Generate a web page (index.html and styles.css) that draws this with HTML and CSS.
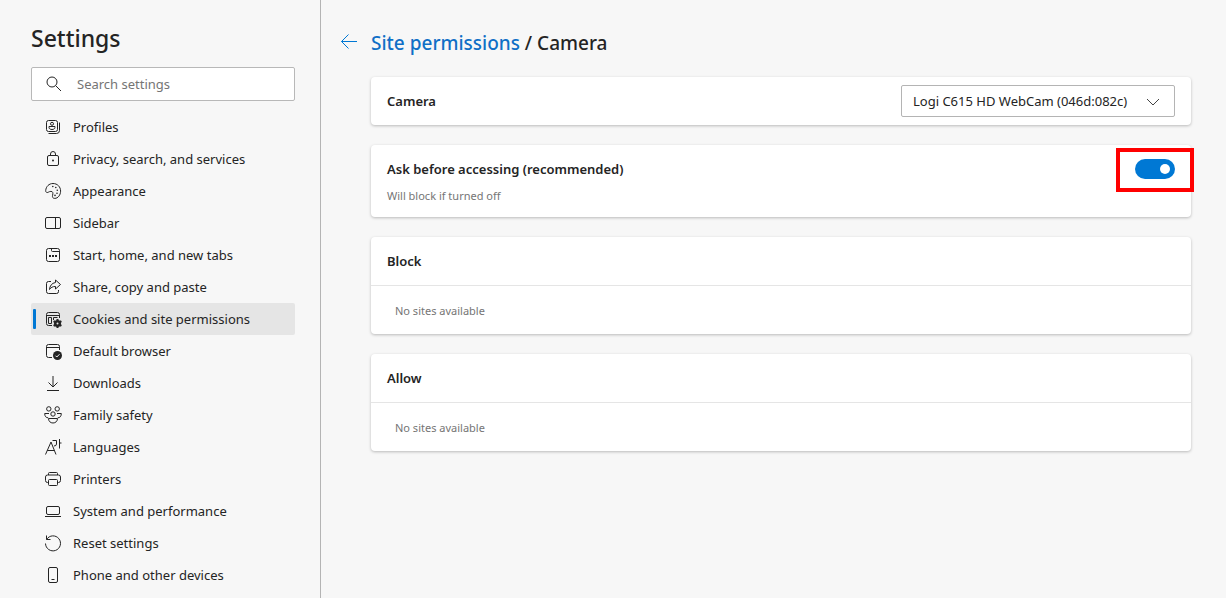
FILE: index.html
```html
<!DOCTYPE html>
<html lang="en">
<head>
    <meta charset="UTF-8">
    <meta name="viewport" content="width=device-width, initial-scale=1.0">
    <title>Settings</title>
    <link rel="stylesheet" href="styles.css">
</head>
<body>
    <aside class="sidebar">
        <h1>Settings</h1>
        <label class="search">
            <svg class="icon" viewBox="0 0 18 18"><circle cx="7" cy="7" r="5"/><path d="M10.700 10.700L16 16"/></svg>
            <input type="search" placeholder="Search settings" aria-label="Search settings">
        </label>
        <nav class="menu">
            <a href="#">
                <svg class="icon" viewBox="0 0 18 18"><rect x="2.500" y="2.500" width="11" height="11" rx="2"/><circle cx="8" cy="5.800" r="1.500"/><path d="M5 8.500h6v.8c0 1.500-1.300 2.200-3 2.200s-3-.7-3-2.200zM15.500 4.500v8a3 3 0 0 1-3 3h-8"/></svg>
                Profiles
            </a>
            <a href="#">
                <svg class="icon" viewBox="0 0 18 18"><rect x="3.500" y="5.500" width="11" height="10" rx="1.500"/><path d="M6.500 5.500V4a2.500 2.500 0 0 1 5 0v1.500"/><circle class="fill" cx="9" cy="10.500" r="1"/></svg>
                Privacy, search, and services
            </a>
            <a href="#">
                <svg class="icon" viewBox="0 0 18 18"><path d="M1.700 8.600C2 4.500 5 1.500 9 1.500c4.400 0 7.600 3.300 7.600 7.600 0 3.900-2.700 7.300-5.800 7.300-2 0-2.700-1.300-2.200-3.100.6-2.200.4-3.900-1.700-3.900-2.100 0-2.700 1.400-4 1.100-.8-.2-1.300-.9-1.200-1.900z"/><g class="fill"><circle cx="8.800" cy="4.500" r=".8"/><circle cx="11.800" cy="5.500" r=".8"/><circle cx="13.300" cy="8.200" r=".8"/><circle cx="13" cy="11.200" r=".8"/><circle cx="11" cy="13.400" r=".8"/></g></svg>
                Appearance
            </a>
            <a href="#">
                <svg class="icon" viewBox="0 0 18 18"><rect x="1.500" y="3.500" width="15" height="11" rx="1.500"/><path d="M11.500 3.500v11"/></svg>
                Sidebar
            </a>
            <a href="#">
                <svg class="icon" viewBox="0 0 18 18"><rect x="2.500" y="2.500" width="13" height="13" rx="2"/><path d="M7.500 2.500v2q0 1 1 1h7"/><path class="fill" d="M5 9h2v2H5zM8 9h2v2H8zM11 9h2v2h-2z"/></svg>
                Start, home, and new tabs
            </a>
            <a href="#">
                <svg class="icon" viewBox="0 0 18 18"><path d="M7 3.500H4.500a2 2 0 0 0-2 2v8a2 2 0 0 0 2 2h8a2 2 0 0 0 2-2V12"/><path d="M11.500 2l5 4.500-5 4.500V8.500C8.500 8.400 7 9.500 5.500 11.500c.3-3.500 2.200-6.500 6-7z"/></svg>
                Share, copy and paste
            </a>
            <a href="#" class="active" aria-current="page">
                <svg class="icon" viewBox="0 0 18 18"><path d="M8 15.500H4.500a2 2 0 0 1-2-2v-9a2 2 0 0 1 2-2h9a2 2 0 0 1 2 2V8M2.500 5.500h13M4.500 7.500h3v6h-3zM9.500 10V7.500h4"/><circle class="fill" cx="13.500" cy="13.500" r="3.500"/><path class="teeth" d="M13.500 9v9M9.600 11.200l7.800 4.600M9.600 15.800l7.800-4.600"/><circle class="hole" cx="13.500" cy="13.500" r="1"/></svg>
                Cookies and site permissions
            </a>
            <a href="#">
                <svg class="icon" viewBox="0 0 18 18"><path d="M8 15.500H4.500a2 2 0 0 1-2-2v-9a2 2 0 0 1 2-2h9a2 2 0 0 1 2 2V8M2.500 5.500h13"/><circle class="fill" cx="13.500" cy="13.500" r="4.500"/><path class="check" d="M11.500 13.700l1.300 1.300 2.700-2.800"/></svg>
                Default browser
            </a>
            <a href="#">
                <svg class="icon" viewBox="0 0 18 18"><path d="M9 2v11M4.500 8.500L9 13l4.500-4.500M3 16.500h12"/></svg>
                Downloads
            </a>
            <a href="#">
                <svg class="icon" viewBox="0 0 18 18"><circle cx="4.800" cy="2.900" r="2.200"/><circle cx="13.200" cy="2.900" r="2.200"/><circle cx="9" cy="8" r="2.200"/><path d="M5 7.500H.7c0 3 1.500 4.300 3.500 4.300M13 7.500h4.300c0 3-1.500 4.300-3.500 4.300M4.500 12.500h9c0 2.700-1.900 4.500-4.500 4.500s-4.500-1.800-4.500-4.500z"/></svg>
                Family safety
            </a>
            <a href="#">
                <svg class="icon" viewBox="0 0 18 18"><path d="M1.500 16.500L7 4l5 12.500M3.200 12.500h7.200M8.500 2.500h4V6q0 2-2.500 2M15.500 1v9.500M15.500 5h2"/></svg>
                Languages
            </a>
            <a href="#">
                <svg class="icon" viewBox="0 0 18 18"><path d="M4.500 12.500h-1a2 2 0 0 1-2-2V7a2 2 0 0 1 2-2h11a2 2 0 0 1 2 2v3.500a2 2 0 0 1-2 2h-1M4.500 5V3.500q0-1 1-1h7q1 0 1 1V5"/><rect x="4.500" y="9.500" width="9" height="6" rx="1"/></svg>
                Printers
            </a>
            <a href="#">
                <svg class="icon" viewBox="0 0 18 18"><rect x="2.500" y="4.500" width="13" height="8" rx="1.500"/><path d="M1 14.500h16"/></svg>
                System and performance
            </a>
            <a href="#">
                <svg class="icon" viewBox="0 0 18 18"><path d="M2.500 1.500v4h4M2.700 5.300A7.500 7.500 0 1 1 1.500 9.500"/></svg>
                Reset settings
            </a>
            <a href="#">
                <svg class="icon" viewBox="0 0 18 18"><rect x="4.500" y="1.500" width="9" height="15" rx="1.500"/><path d="M7.500 13.500h3"/></svg>
                Phone and other devices
            </a>
        </nav>
    </aside>

    <main class="content">
        <header class="page-header">
            <button class="back" type="button" aria-label="Back">
                <svg class="icon" viewBox="0 0 18 18"><path d="M17 8.500H1.500M8.500 1.500l-7 7 7 7"/></svg>
            </button>
            <h2><a href="#">Site permissions</a> / Camera</h2>
        </header>

        <section class="card row">
            <label class="card-title" for="camera">Camera</label>
            <div class="select-box">
                <select id="camera">
                    <option>Logi C615 HD WebCam (046d:082c)</option>
                </select>
                <svg class="chevron" viewBox="0 0 14 8"><path d="M1 1l6 6 6-6"/></svg>
            </div>
        </section>

        <section class="card row ask">
            <div>
                <label class="card-title" for="ask">Ask before accessing (recommended)</label>
                <p class="hint">Will block if turned off</p>
            </div>
            <div class="toggle-box">
                <input type="checkbox" id="ask" class="toggle" role="switch" checked>
            </div>
        </section>

        <section class="card">
            <h3 class="card-title">Block</h3>
            <p class="empty">No sites available</p>
        </section>

        <section class="card">
            <h3 class="card-title">Allow</h3>
            <p class="empty">No sites available</p>
        </section>
    </main>
</body>
</html>
```
FILE: styles.css
```css
* {
    box-sizing: border-box;
}
body {
    display: flex;
    min-height: 100vh;
    margin: 0;
    background: #f7f7f7;
    color: #242424;
    font-family: "Segoe UI", "Noto Sans", sans-serif;
    font-size: 13px;
    line-height: 20px;
}
h1, h2, h3, p {
    margin: 0;
}
a {
    color: inherit;
    text-decoration: none;
}
input, select {
    font: inherit;
    color: inherit;
}
.icon {
    flex: none;
    width: 18px;
    height: 18px;
    fill: none;
    stroke: currentColor;
    stroke-width: 1;
}
.icon .fill {
    fill: currentColor;
    stroke: none;
}
.icon .teeth {
    stroke-width: 2;
}
.icon .hole {
    fill: #e5e5e5;
    stroke: none;
}
.icon .check {
    stroke: #f7f7f7;
}

/* sidebar */
.sidebar {
    flex: none;
    width: 321px;
    padding: 22px 25px 0 31px;
    border-right: 1px solid #b4b4b4;
}
h1 {
    margin-bottom: 13px;
    font-size: 23px;
    font-weight: 500;
    line-height: 32px;
}
.search {
    display: flex;
    align-items: center;
    gap: 14px;
    height: 34px;
    margin-bottom: 10px;
    padding: 0 13px;
    background: white;
    border: 1px solid #b8b8b8;
    border-radius: 2px;
}
.search input {
    flex: 1;
    min-width: 0;
    padding: 0;
    border: none;
    outline: none;
    background: none;
}
.search input::placeholder {
    color: #757575;
}
.menu a {
    position: relative;
    display: flex;
    align-items: center;
    gap: 11px;
    height: 32px;
    padding-left: 13px;
    border-radius: 2px;
}
.menu a:hover, .menu .active {
    background: #e5e5e5;
}
.menu .active::before {
    content: "";
    position: absolute;
    left: 2px;
    top: 6px;
    width: 3px;
    height: 20px;
    border-radius: 1px;
    background: #0078d4;
}

/* content */
.content {
    flex: 1;
    display: flex;
    flex-direction: column;
    gap: 20px;
    padding: 27px 35px 20px 50px;
}
.page-header {
    display: flex;
    align-items: center;
    gap: 13px;
    margin-left: -31px;
}
.back {
    display: flex;
    padding: 0;
    border: none;
    background: none;
    color: #0078d4;
    cursor: pointer;
}
h2 {
    padding-top: 2px;
    font-size: 19px;
    font-weight: 500;
    line-height: 28px;
}
h2 a {
    color: #0f6fc6;
}
.card {
    background: white;
    border-radius: 4px;
    box-shadow: 0 1px 3px rgba(0,0,0,0.25);
}
.card-title {
    font-size: 13px;
    font-weight: 600;
}
.row {
    display: flex;
    align-items: center;
    justify-content: space-between;
    padding: 8px 16px;
}
.select-box {
    position: relative;
}
.select-box select {
    appearance: none;
    display: block;
    height: 32px;
    padding: 0 46px 0 11px;
    border: 1px solid #b4b4b4;
    border-radius: 2px;
    background: white;
}
.chevron {
    position: absolute;
    right: 15px;
    top: 13px;
    width: 14px;
    height: 8px;
    fill: none;
    stroke: #444;
    pointer-events: none;
}
.ask {
    align-items: flex-start;
    padding: 14px 16px 11px;
}
.hint {
    margin-top: 7px;
    color: #757575;
    font-size: 11px;
}
.toggle-box {
    position: relative;
    display: flex;
}
.toggle-box::after {
    content: "";
    position: absolute;
    inset: -11px -19px -13px;
    border: 4px solid #f00;
    pointer-events: none;
}
.toggle {
    appearance: none;
    display: flex;
    align-items: center;
    justify-content: flex-start;
    width: 40px;
    height: 20px;
    margin: 0;
    padding: 0 5px;
    border-radius: 10px;
    background: #767676;
}
.toggle::before {
    content: "";
    width: 10px;
    height: 10px;
    border-radius: 50%;
    background: white;
}
.toggle:checked {
    justify-content: flex-end;
    background: #0078d4;
}
h3.card-title {
    padding: 14px 16px;
    border-bottom: 1px solid #e5e5e5;
}
.empty {
    padding: 15px 24px 13px;
    color: #757575;
    font-size: 11px;
}
```
